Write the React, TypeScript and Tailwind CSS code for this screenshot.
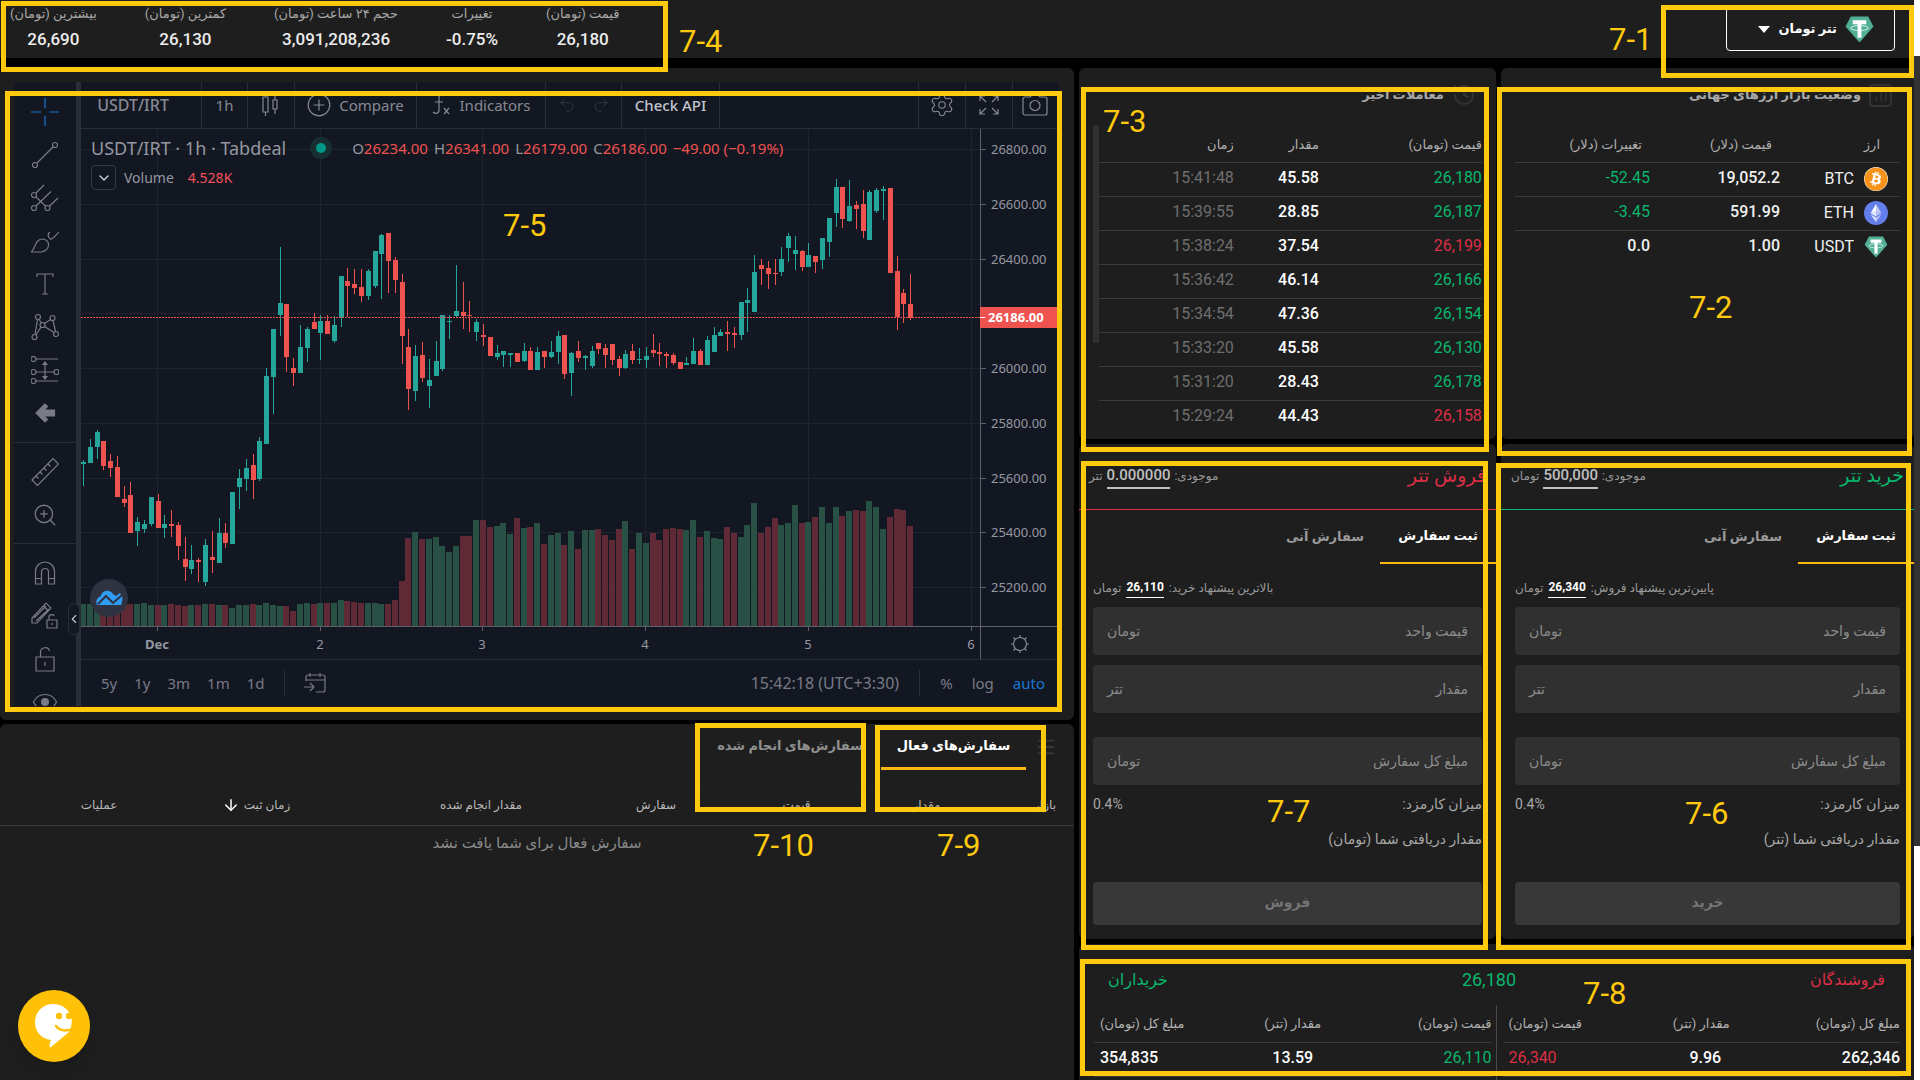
import { useState } from 'react'
import type { ReactNode } from 'react'
import { ArrowDown, ChartNoAxesColumn, ChevronDown, ChevronLeft, History, Menu, Redo2, Settings, Undo2, ZoomIn } from 'lucide-react'
import { FaBitcoin } from 'react-icons/fa'

const STATS = [
  { label: 'قیمت (تومان)', value: '26,180' },
  { label: 'تغییرات', value: '-0.75%' },
  { label: 'حجم ۲۴ ساعت (تومان)', value: '3,091,208,236' },
  { label: 'کمترین (تومان)', value: '26,130' },
  { label: 'بیشترین (تومان)', value: '26,690' },
]

const TRADES = [
  { price: '26,180', amount: '45.58', time: '15:41:48', up: true },
  { price: '26,187', amount: '28.85', time: '15:39:55', up: true },
  { price: '26,199', amount: '37.54', time: '15:38:24', up: false },
  { price: '26,166', amount: '46.14', time: '15:36:42', up: true },
  { price: '26,154', amount: '47.36', time: '15:34:54', up: true },
  { price: '26,130', amount: '45.58', time: '15:33:20', up: true },
  { price: '26,178', amount: '28.43', time: '15:31:20', up: true },
  { price: '26,158', amount: '44.43', time: '15:29:24', up: false },
]

// direction (1 = up), high, body top, body bottom, low, volume bar height
const CANDLES = [
  [1,460,462,464,486,22],[1,439,447,463,463,22],[1,430,432,447,459,22],[0,441,441,466,470,21],[0,454,461,468,477,21],
  [0,456,467,497,497,21],[0,486,499,503,507,21],[0,482,495,533,533,22],[1,517,522,531,546,22],[1,520,524,529,533,23],
  [1,497,497,524,526,21],[0,494,501,528,528,21],[1,515,524,528,538,21],[0,510,524,526,537,22],[0,522,525,546,560,21],
  [0,537,559,567,581,20],[1,545,560,569,574,21],[0,558,560,562,582,21],[1,539,545,582,586,22],[0,531,557,560,573,22],
  [1,518,533,563,563,21],[0,523,533,543,548,21],[1,492,492,544,544,18],[1,469,478,487,509,21],[1,459,468,479,491,21],
  [0,454,465,480,499,22],[1,437,441,479,481,21],[1,368,376,444,444,23],[1,329,329,377,414,21],[1,247,303,315,336,20],
  [0,304,304,357,372,20],[0,358,368,373,386,15],[1,325,347,373,373,22],[1,327,329,348,362,23],[0,313,322,329,329,22],
  [1,315,321,333,360,23],[0,315,321,334,334,23],[1,316,325,341,343,23],[1,276,276,317,327,26],[0,268,281,286,317,25],
  [0,269,284,288,294,24],[0,269,287,296,302,23],[1,269,271,296,300,23],[1,251,251,286,288,23],[1,234,235,254,299,22],
  [0,233,233,261,293,22],[0,257,260,280,293,26],[0,274,282,336,364,45],[0,329,347,389,410,88],[1,345,356,391,401,94],
  [0,342,355,378,382,87],[1,359,380,386,408,87],[1,341,361,376,376,89],[1,315,315,369,371,80],[1,315,321,322,339,74],
  [1,265,311,316,317,80],[0,282,312,316,329,90],[0,301,315,316,332,90],[1,319,322,332,341,106],[0,324,335,337,346,106],
  [0,337,337,356,356,99],[1,345,353,357,360,100],[1,351,351,355,367,103],[1,353,353,355,367,92],[0,353,353,362,362,108],
  [1,343,351,361,362,98],[0,347,351,370,370,99],[1,347,352,370,370,103],[0,351,351,357,368,82],[1,341,352,357,358,91],
  [1,331,336,352,364,93],[0,335,335,374,379,81],[1,352,353,373,396,95],[0,341,351,358,362,77],[1,355,356,358,370,96],
  [1,346,351,366,368,96],[0,343,343,349,354,97],[0,344,348,355,368,91],[0,344,344,360,365,86],[0,356,359,368,376,97],
  [1,350,354,368,369,105],[0,344,351,360,364,77],[1,348,359,360,364,93],[1,347,356,360,368,83],[0,334,350,353,357,93],
  [0,343,352,354,366,86],[0,352,354,356,368,97],[0,353,355,363,365,98],[0,362,362,369,369,97],[1,357,363,365,365,96],
  [1,338,351,364,364,106],[0,349,351,365,365,89],[1,336,340,365,365,95],[1,327,335,352,352,88],[1,329,332,336,336,87],
  [0,321,332,334,351,99],[0,327,333,335,348,93],[1,302,302,335,340,89],[1,288,300,303,332,101],[1,255,272,312,312,123],
  [0,259,265,269,285,93],[0,261,268,274,289,99],[0,259,273,274,285,108],[1,247,259,272,276,101],[1,233,236,248,262,103],
  [1,236,250,254,270,121],[0,250,251,267,271,103],[1,243,255,267,267,104],[0,256,256,262,273,109],[1,238,238,260,269,119],
  [1,218,218,242,257,103],[1,179,187,213,227,119],[0,187,187,219,228,110],[1,180,206,221,222,115],[0,201,205,209,229,116],
  [0,190,204,231,238,115],[1,190,192,240,240,125],[1,188,190,211,213,119],[1,186,189,191,220,97],[0,188,188,273,273,109],
  [0,256,271,317,330,117],[0,289,293,304,323,116],[0,274,304,318,320,100],
]

const PRICES = [26800, 26600, 26400, 26200, 26000, 25800, 25600, 25400, 25200]
const DAYS = ['Dec', '2', '3', '4', '5', '6']

// Guide frames and numbers that lie over the whole screen
const FRAMES = [
  'left-[1661px] top-[5px] w-[253px] h-[73px]',
  'left-[1497px] top-[87px] w-[415px] h-[369px]',
  'left-[1081px] top-[87px] w-[408px] h-[365px]',
  'left-[1px] top-[1px] w-[667px] h-[71px]',
  'left-[5px] top-[91px] w-[1057px] h-[621px]',
  'left-[1496px] top-[463px] w-[415px] h-[487px]',
  'left-[1081px] top-[461px] w-[407px] h-[489px]',
  'left-[1080px] top-[959px] w-[831px] h-[117px]',
  'left-[875px] top-[725px] w-[171px] h-[87px]',
  'left-[695px] top-[723px] w-[171px] h-[89px]',
]

const MARKS = [
  { text: '7-1', place: 'left-[1609px] top-[25px]' },
  { text: '7-2', place: 'left-[1689px] top-[293px]' },
  { text: '7-3', place: 'left-[1103px] top-[107px]' },
  { text: '7-4', place: 'left-[679px] top-[27px]' },
  { text: '7-5', place: 'left-[503px] top-[211px]' },
  { text: '7-6', place: 'left-[1685px] top-[799px]' },
  { text: '7-7', place: 'left-[1267px] top-[797px]' },
  { text: '7-8', place: 'left-[1583px] top-[979px]' },
  { text: '7-9', place: 'left-[937px] top-[831px]' },
  { text: '7-10', place: 'left-[753px] top-[831px]' },
]

/* ── Coin logos ── */
function TetherIcon({ className }: { className: string }) {
  return (
    <svg viewBox="0 0 30 28" className={className}>
      <path d="M6 0.5h18l5.5 10.5L15 27.5 0.5 11z" fill="#50af95" />
      <path d="M8 4.500h14v4h-5v14h-4v-14H8z" fill="#fff" />
      <ellipse cx="15" cy="12.500" rx="9" ry="2.600" fill="none" stroke="#fff" strokeWidth="0.8" />
    </svg>
  )
}

function EthIcon() {
  return (
    <svg viewBox="0 0 24 24" className="size-6">
      <circle cx="12" cy="12" r="12" fill="#627eea" />
      <path d="M12 3v6.700l5.400 2.500z" fill="#fff" fillOpacity="0.6" />
      <path d="M12 3L6.600 12.200 12 9.700z" fill="#fff" />
      <path d="M12 16.600V21l5.400-7.500zM12 15.400l5.400-3.200L12 9.700z" fill="#fff" fillOpacity="0.5" />
      <path d="M12 21v-4.400l-5.400-3.100zM6.600 12.200l5.400 3.200V9.700z" fill="#fff" fillOpacity="0.8" />
    </svg>
  )
}

/* ── Chart tools ── */
function Tool({ name, children, active }: { name: string; children: ReactNode; active?: boolean }) {
  return (
    <button aria-label={name} className={`flex h-[43px] w-full items-center justify-center ${active ? 'text-[#1976d2]' : 'text-[#787b86]'}`}>
      <svg viewBox="0 0 28 28" className="size-7" fill="none" stroke="currentColor" strokeWidth="1.200">
        {children}
      </svg>
    </button>
  )
}

function ToolRail() {
  return (
    <div className="relative w-[67px] shrink-0 border-r-[5px] border-[#2a2e39]">
      {/* last tool is cut off by the frame */}
      <div className="absolute inset-0 overflow-hidden">
        <div className="border-b border-[#2a2e39] py-2">
          <Tool name="Cross" active>
            <path d="M0 14h10M18 14h10M14 0v10M14 18v10" />
          </Tool>
          <Tool name="Trend line">
            <circle cx="4" cy="24" r="2.500" /><circle cx="24" cy="4" r="2.500" />
            <path d="M6 22L22 6" />
          </Tool>
          <Tool name="Pitchfork">
            <circle cx="3" cy="11" r="2.500" /><circle cx="3" cy="24" r="2.500" /><circle cx="16.500" cy="24" r="2.500" />
            <path d="M5 9l8-8M5 13l9.500 9M5 22L20 7.500M18.500 22L27 14" />
          </Tool>
          <Tool name="Brush">
            <path d="M0 25c4-2 4-13 11-13 4 0 7 3 6.500 6.500C17 22 14 25 10 25zM19 5c-3 2-2 6 1 7.500M19.500 12.500c2 0 3-2 9-8" />
          </Tool>
          <Tool name="Text">
            <path d="M6 7V4h16v3M14 4v20M11 24h6" />
          </Tool>
          <Tool name="Pattern">
            <circle cx="7" cy="4" r="2.500" /><circle cx="21.500" cy="5" r="2.500" /><circle cx="11.500" cy="12" r="2.500" />
            <circle cx="3.500" cy="24" r="2.500" /><circle cx="25" cy="21" r="2.500" />
            <path d="M6.500 6.500L4 21.500M8 6.500l2.500 3.500M10 14l-5 8M13.500 10.500l6-4M22 7.500l2.500 11M13.500 13.500l9.500 6" />
          </Tool>
          <Tool name="Projection">
            <circle cx="2.500" cy="3" r="2.500" /><circle cx="2.500" cy="16" r="2.500" /><circle cx="2.500" cy="25" r="2.500" /><circle cx="25.500" cy="16" r="2.500" />
            <path d="M5 3h22M5 16h18M5 25h22M14 8v12" />
            <path d="M14 5l-3 4h6zM14 24l-3-4h6z" fill="currentColor" stroke="none" />
          </Tool>
          <Tool name="Back">
            <path d="M14 5L5 14l9 9 2.500-2.500L13 17h10.500v-6H13l3.500-3.500z" fill="currentColor" />
          </Tool>
        </div>
        <div className="border-b border-[#2a2e39] py-[7px]">
          <Tool name="Measure">
            <path d="M1 22L22 0.500l5.500 5.500L6.500 27.500zM5 18l2.500 2.500M9 14l2.500 2.500M13 10l2.500 2.500M17 6l2.500 2.500" />
          </Tool>
          <button aria-label="Zoom in" className="flex h-[43px] w-full items-center justify-center text-[#787b86]">
            <ZoomIn size={26} strokeWidth={1.2} />
          </button>
        </div>
        <div className="py-[7px]">
          <Tool name="Magnet">
            <path d="M4.500 25V12.500a9.500 9.500 0 0119 0V25h-6V13a3.500 3.500 0 00-7 0v12zM4.500 19.500h6M17.500 19.500h6" />
          </Tool>
          <Tool name="Lock drawing">
            <path d="M1 21v-5L15 1l5 5L6 21zM12.500 4l5 5M3 16l12-12M5 19L18 7M16 18h10v8H16zM18 18v-3c0-3 5-3 5-1M21 21v2" />
          </Tool>
          <Tool name="Lock all">
            <path d="M5 12h18v14H5zM9.500 12V7c0-5 8-6 9-1M14 17v4" />
          </Tool>
          <Tool name="Hide drawings">
            <path d="M2.500 14C7 4 21 4 25.500 14 21 24 7 24 2.500 14z" />
            <circle cx="14" cy="14" r="4" fill="currentColor" stroke="none" />
          </Tool>
        </div>
      </div>
      <button aria-label="Collapse" className="absolute -right-1 top-[521px] flex h-8 w-3 items-center justify-center rounded-md border border-[#2a2e39] bg-[#131722] text-[#c0c3cc]">
        <ChevronLeft size={14} className="shrink-0" />
      </button>
    </div>
  )
}

function ChartToolbar() {
  const cell = 'flex items-center justify-center border-r border-[#2a2e39]'
  return (
    <div className="flex h-[47px] border-b border-[#2a2e39] text-[15px] text-[#868993]">
      <button className={`${cell} w-[121px] pr-4 text-[16px] font-medium`}>USDT/IRT</button>
      <button className={`${cell} w-[46px]`}>1h</button>
      <button aria-label="Candles" className={`${cell} w-[47px]`}>
        <svg viewBox="0 0 20 24" className="h-6 w-5" fill="none" stroke="currentColor" strokeWidth="1.200">
          <path d="M2 4h5v15H2zM4.500 1v3M4.500 19v4M12 7h4v9h-4zM14 3v4M14 16v5" />
        </svg>
      </button>
      <button className={`${cell} w-[122px] gap-2`}>
        <svg viewBox="0 0 24 24" className="size-6 shrink-0" fill="none" stroke="currentColor" strokeWidth="1.200">
          <circle cx="12" cy="12" r="10.800" />
          <path d="M12 6.500v11M6.500 12h11" />
        </svg>
        Compare
      </button>
      <button className={`${cell} w-[129px] gap-[10px]`}>
        <svg viewBox="0 0 18 22" className="h-[22px] w-[18px] shrink-0" fill="none" stroke="currentColor" strokeWidth="1.200">
          <path d="M12 2c-1-2-5-2-5 2v12c0 4-4 4-6 2M3 8h8M12 14l5 6M17 14l-5 6" />
        </svg>
        Indicators
      </button>
      <div className={`${cell} w-[76px] gap-4 text-[#363a45]`}>
        <button aria-label="Undo"><Undo2 size={18} strokeWidth={1.2} /></button>
        <button aria-label="Redo"><Redo2 size={18} strokeWidth={1.2} /></button>
      </div>
      <button className={`${cell} w-[98px] font-medium text-[#c1c4cd]`}>Check API</button>
      <div className="flex-1 border-r border-[#2a2e39]" />
      <button aria-label="Settings" className={`${cell} w-[47px]`}><Settings size={26} strokeWidth={1} /></button>
      <button aria-label="Full screen" className={`${cell} w-[47px]`}>
        <svg viewBox="0 0 20 20" className="size-5" fill="none" stroke="currentColor" strokeWidth="1.200">
          <path d="M1 6V1h5M1 1l6 6M14 1h5v5M19 1l-6 6M1 14v5h5M1 19l6-6M14 19h5v-5M19 19l-6-6" />
        </svg>
      </button>
      <button aria-label="Snapshot" className="flex w-[44px] items-center justify-center">
        <svg viewBox="0 0 26 22" className="h-[22px] w-[26px]" fill="none" stroke="currentColor" strokeWidth="1.200">
          <path d="M3 3h5l2-2h6l2 2h5c1 0 2 1 2 2v14c0 1-1 2-2 2H3c-1 0-2-1-2-2V5c0-1 1-2 2-2z" />
          <circle cx="13" cy="11.500" r="5" />
        </svg>
      </button>
    </div>
  )
}

function PriceChart() {
  return (
    <svg viewBox="81 129 976 530" className="block w-full" fontSize="13" fill="#9598a1">
      {PRICES.map((p, i) => (
        <g key={p}>
          <rect x="81" y={149 + Math.round(i * 54.75)} width="900" height="1" fill="#1f232e" />
          <rect x="981" y={149 + Math.round(i * 54.75)} width="5" height="1" fill="#5d606b" />
          {p !== 26200 && <text x="991" y={154 + Math.round(i * 54.75)}>{p}.00</text>}
        </g>
      ))}
      {DAYS.map((d, i) => {
        const x = Math.round(157 + i * 162.7)
        return (
          <g key={d}>
            <rect x={x} y="129" width="1" height="497" fill="#1f232e" />
            <rect x={x} y="627" width="1" height="4" fill="#5d606b" />
            <text x={x} y="649" textAnchor="middle" fontWeight={i === 0 ? 700 : 400}>{d}</text>
          </g>
        )
      })}

      {CANDLES.map(([up, high, top, bottom, low, vol], i) => {
        const x = Math.round(83 + i * 6.78)
        const color = up ? '#26a69a' : '#ef5350'
        return (
          <g key={i}>
            <rect x={x - 3} y={626 - vol} width="6" height={vol} fill={up ? '#285044' : '#5f2a35'} />
            <rect x={x} y={high} width="1" height={low - high} fill={color} />
            <rect x={x - 2} y={top} width="5" height={Math.max(1, bottom - top)} fill={color} />
          </g>
        )
      })}

      <path d="M81 317.500H981" stroke="#ef5350" strokeDasharray="2 1" />
      <rect x="81" y="626" width="976" height="1" fill="#5d606b" />
      <rect x="980" y="129" width="1" height="530" fill="#5d606b" />
      <rect x="980" y="307" width="77" height="21" fill="#ef5350" />
      <rect x="980" y="317" width="5" height="1" fill="#fff" />
      <text x="988" y="322" fill="#fff" fontWeight="700">26186.00</text>

      <circle cx="109" cy="598" r="19" fill="#2f3241" />
      <path d="M97 605c-2-5 1-8 4-9 1-6 9-7 12-2l3 2 4-3 2 3c1 2 0 7-1 9z" fill="#2f9df4" />
      <path d="M98 604l8-8 7 7 9-8" fill="none" stroke="#2f3241" strokeWidth="2" />
    </svg>
  )
}

function ChartPanel() {
  return (
    <section className="rounded-md bg-[#1e1e1e] py-[14px] pl-[14px] pr-[15px]">
      <div dir="ltr" className="flex overflow-hidden bg-[#131722] pr-[2px] [font-family:'Noto_Sans',sans-serif]">
        <ToolRail />
        <div className="min-w-0 flex-1">
          <ChartToolbar />
          <div className="relative">
            <PriceChart />
            {/* Legend over the plot */}
            <div className="absolute left-[10px] top-[5px] text-[#9598a1]">
              <div className="flex h-7 items-center whitespace-nowrap text-[15px]">
                <span className="text-[18px]">USDT/IRT · 1h · Tabdeal</span>
                <span className="ml-6 mr-5 flex size-[22px] items-center justify-center rounded-full bg-[#17302f]">
                  <span className="size-[10px] rounded-full bg-[#009688]" />
                </span>
                <span className="flex gap-[6px]">
                  <span>O<b className="font-normal text-[#ef5350]">26234.00</b></span>
                  <span>H<b className="font-normal text-[#ef5350]">26341.00</b></span>
                  <span>L<b className="font-normal text-[#ef5350]">26179.00</b></span>
                  <span>C<b className="font-normal text-[#ef5350]">26186.00</b></span>
                  <span className="text-[#ef5350]">−49.00 (−0.19%)</span>
                </span>
              </div>
              <div className="mt-[3px] flex h-[25px] items-center text-[14px]">
                <button aria-label="Hide legend" className="flex size-[25px] items-center justify-center rounded border border-[#363a45] text-[#d1d4dc]">
                  <ChevronDown size={16} />
                </button>
                <span className="ml-2">Volume</span>
                <span className="ml-[14px] text-[#f0505c]">4.528K</span>
              </div>
            </div>
            <button aria-label="Axis settings" className="absolute bottom-[5px] right-[27px] text-[#868993]">
              <svg viewBox="0 0 20 20" className="size-5" fill="none" stroke="currentColor" strokeWidth="1.200">
                <circle cx="10" cy="10" r="6.500" />
                <path d="M10 3.500V1M10 16.500V19M3.500 10H1M16.500 10H19M5.500 5.500L3.500 3.500M14.500 5.500l2-2M5.500 14.500l-2 2M14.500 14.500l2 2" />
              </svg>
            </button>
          </div>
          <div className="flex h-[47px] items-center border-t border-[#2a2e39] text-[15px] text-[#787b86]">
            <div className="flex gap-[17px] pl-5">
              {['5y', '1y', '3m', '1m', '1d'].map(r => <button key={r}>{r}</button>)}
            </div>
            <span className="mx-[19px] h-[26px] w-px bg-[#2a2e39]" />
            <button aria-label="Go to date">
              <svg viewBox="0 0 22 20" className="h-5 w-[22px]" fill="none" stroke="currentColor" strokeWidth="1.200">
                <path d="M2 8V4c0-1 1-2 2-2h15c1 0 2 1 2 2v13c0 1-1 2-2 2h-7M2 7h19M6 0v4M16 0v4M0 14h9M6 10l4 4-4 4" />
              </svg>
            </button>
            <div className="flex-1" />
            <span className="text-[16px]">15:42:18 (UTC+3:30)</span>
            <span className="mx-5 h-[26px] w-px bg-[#2a2e39]" />
            <div className="flex gap-[19px] pr-3">
              <button>%</button>
              <button>log</button>
              <button className="text-[#1976d2]">auto</button>
            </div>
          </div>
        </div>
      </div>
    </section>
  )
}

/* ── Orders ── */
function OrdersPanel() {
  const [tab, setTab] = useState<'active' | 'done'>('active')
  const tabClass = (on: boolean) => `h-[46px] border-b-[3px] text-[13px] font-bold ${on ? 'border-[#fbb80f] text-white' : 'border-transparent text-[#8f8f8f]'}`

  return (
    <section className="flex-1 rounded-t-md bg-[#1e1e1e]">
      <div className="flex h-[62px] items-start border-b border-[#222] pr-[17px]">
        <Menu size={22} className="mt-3 text-[#383838]" />
        <button onClick={() => setTab('active')} className={`mr-[9px] w-[145px] ${tabClass(tab === 'active')}`}>سفارش‌های فعال</button>
        <button onClick={() => setTab('done')} className={`mr-[18px] w-[145px] whitespace-nowrap ${tabClass(tab === 'done')}`}>سفارش‌های انجام شده</button>
      </div>
      <table className="w-full table-fixed text-[12px]">
        <thead>
          <tr className="h-[39px] border-b border-[#3a3a3a] text-[#b8b8b8]">
            <th className="w-[90px] pr-[18px] text-right font-normal">بازار</th>
            <th className="w-[115px] font-normal">مقدار</th>
            <th className="w-[145px] font-normal">قیمت</th>
            <th className="w-[136px] font-normal">سفارش</th>
            <th className="w-[214px] font-normal">مقدار انجام شده</th>
            <th className="pr-[60px] font-normal">
              <span className="flex items-center justify-center gap-1">زمان ثبت <ArrowDown size={18} className="text-white" /></span>
            </th>
            <th className="w-[198px] font-normal">عملیات</th>
          </tr>
        </thead>
        <tbody>
          <tr className="h-9">
            <td colSpan={7} className="text-center text-[15px] text-[#8a8a8a]">سفارش فعال برای شما یافت نشد</td>
          </tr>
        </tbody>
      </table>
    </section>
  )
}

/* ── Market lists ── */
function WorldMarket() {
  const rows = [
    { icon: <FaBitcoin size={24} className="rounded-full bg-white text-[#f7931a]" />, coin: 'BTC', price: '19,052.2', change: '-52.45' },
    { icon: <EthIcon />, coin: 'ETH', price: '591.99', change: '-3.45' },
    { icon: <TetherIcon className="h-[22px] w-6" />, coin: 'USDT', price: '1.00', change: '0.0' },
  ]
  return (
    <section className="h-[371px] min-w-0 flex-[413] rounded-md bg-[#1e1e1e] px-[14px] pt-[15px]">
      <h2 className="flex h-6 items-center gap-2 pr-2 text-[13px] font-semibold text-[#a8a8a8]">
        <span className="flex size-[23px] items-center justify-center rounded-sm border-2 border-[#333] text-[#333]"><ChartNoAxesColumn size={16} /></span>
        وضعیت بازار ارزهای جهانی
      </h2>
      <table className="mt-5 w-full table-fixed text-[16px] text-[#f0f0f0]">
        <thead>
          <tr className="h-[35px] text-[13px] text-[#b0b0b0]">
            <th className="w-[120px] pr-5 text-right font-normal">ارز</th>
            <th className="w-[130px] pr-2 text-right font-normal">قیمت (دلار)</th>
            <th className="pr-2 text-right font-normal">تغییرات (دلار)</th>
          </tr>
        </thead>
        <tbody>
          {rows.map(row => (
            <tr key={row.coin} className="h-[34px] border-t border-[#3a3a3a]">
              <td className="pr-3"><span className="flex items-center gap-[10px]">{row.icon}{row.coin}</span></td>
              <td className="pb-[2px] text-right font-medium"><bdi>{row.price}</bdi></td>
              <td className={`pb-[2px] text-right ${row.change.startsWith('-') ? 'text-[#09b66d]' : 'font-medium'}`}><bdi dir="ltr">{row.change}</bdi></td>
            </tr>
          ))}
        </tbody>
      </table>
    </section>
  )
}

function RecentTrades() {
  return (
    <section className="flex h-[371px] min-w-0 flex-[417] rounded-md bg-[#1e1e1e] pl-[14px] pr-[14px] pt-[15px]">
      <div className="flex-1">
        <h2 className="flex h-6 items-center gap-2 pr-[6px] text-[13px] font-semibold text-[#a8a8a8]">
          <History size={24} className="text-[#333]" />
          معاملات اخیر
        </h2>
        <table className="mt-5 w-full table-fixed text-[16px]">
          <thead>
            <tr className="h-[35px] text-[13px] text-[#b0b0b0]">
              <th className="w-[163px] text-right font-normal">قیمت (تومان)</th>
              <th className="w-[85px] text-right font-normal">مقدار</th>
              <th className="text-right font-normal">زمان</th>
            </tr>
          </thead>
          <tbody>
            {TRADES.map(t => (
              <tr key={t.time} className="h-[34px] border-t border-[#3a3a3a]">
                <td className={`pb-[2px] ${t.up ? 'text-[#09b66d]' : 'text-[#dc2f45]'}`}>{t.price}</td>
                <td className="pb-[2px] font-medium text-white">{t.amount}</td>
                <td className="pb-[2px] text-[#6e6e6e]">{t.time}</td>
              </tr>
            ))}
          </tbody>
        </table>
      </div>
      <div className="mt-[42px] h-[218px] w-[6px] bg-[#303030]" />
    </section>
  )
}

/* ── Buy / sell form ── */
type OrderFormProps = {
  title: string
  balance: string
  balanceUnit: string
  hint: string
  hintPrice: string
  receive: string
  action: string
  buy?: boolean
}

function OrderForm({ title, balance, balanceUnit, hint, hintPrice, receive, action, buy }: OrderFormProps) {
  const fields = [
    { name: 'قیمت واحد', unit: 'تومان', gap: '' },
    { name: 'مقدار', unit: 'تتر', gap: 'mt-[10px]' },
    { name: 'مبلغ کل سفارش', unit: 'تومان', gap: 'mt-6' },
  ]
  return (
    <section className={`h-[495px] min-w-0 rounded-md bg-[#1e1e1e] ${buy ? 'flex-[413]' : 'flex-[417]'}`}>
      <div className={`flex h-[66px] items-center justify-between border-b px-[10px] ${buy ? 'border-[#09b66d]' : 'border-[#dc2f45]'}`}>
        <h2 className={`text-[19px] ${buy ? 'text-[#09b66d]' : 'text-[#dc2f45]'}`}>{title}</h2>
        <p className="flex items-baseline gap-1 text-[12px] text-[#9a9a9a]">
          موجودی: <b className="border-b-2 border-[#c0c0c0] pb-[2px] text-[15px] font-medium leading-[20px] text-[#c0c0c0]">{balance}</b> {balanceUnit}
        </p>
      </div>
      <div className="flex h-[54px] text-[13px] font-bold">
        <button className="w-[116px] border-b-2 border-[#fbb80f] text-white">ثبت سفارش</button>
        <button className="w-[110px] text-[#9a9a9a]">سفارش آنی</button>
      </div>
      <div className="px-[14px]">
        <p className="flex h-[43px] items-center justify-end gap-[5px] pt-1 text-[12px] text-[#9a9a9a]">
          {hint} <b className="border-b border-white text-[12px] leading-[20px] text-white">{hintPrice}</b> تومان
        </p>
        {fields.map(f => (
          <div key={f.name} className={`flex h-12 items-center justify-between rounded bg-[#303030] px-[14px] text-[14px] text-[#8c8c8c] ${f.gap}`}>
            <input aria-label={f.name} placeholder={f.name} className="min-w-0 flex-1 bg-transparent outline-none placeholder:text-[#8c8c8c]" />
            <span>{f.unit}</span>
          </div>
        ))}
        <div className="flex h-[38px] items-center justify-between text-[14px] text-[#a8a8a8]">
          <span>میزان کارمزد:</span>
          <bdi dir="ltr">0.4%</bdi>
        </div>
        <p className="flex h-8 items-center text-[14px] text-[#a8a8a8]">{receive}</p>
        <button className="mt-[27px] h-[43px] w-full rounded bg-[#383838] pb-[2px] text-[14px] font-bold text-[#757575]">{action}</button>
      </div>
    </section>
  )
}

/* ── Order book ── */
function OrderBook() {
  return (
    <section className="flex-1 rounded-t-md bg-[#1e1e1e]">
      <div className="flex h-[61px] items-center justify-between px-[29px] pt-[10px] text-[16px]">
        <h2 className="text-[#dc2f45]">فروشندگان</h2>
        <span className="text-[18px] text-[#09b66d]">26,180</span>
        <h2 className="text-[#09b66d]">خریداران</h2>
      </div>
      <div className="flex h-[75px]">
        <div className="flex-1 border-l border-[#4a4a4a] pl-[6px] pr-[14px]">
          <table className="w-full table-fixed text-[16px]">
            <thead>
              <tr className="h-[37px] border-b border-[#3a3a3a] text-[13px] text-[#b0b0b0]">
                <th className="text-right font-normal">مبلغ کل (تومان)</th>
                <th className="font-normal">مقدار (تتر)</th>
                <th className="pl-[6px] text-left font-normal">قیمت (تومان)</th>
              </tr>
            </thead>
            <tbody>
              <tr className="h-[34px] border-b border-[#3a3a3a] font-medium text-white">
                <td className="pb-[2px]">262,346</td>
                <td className="pb-[2px] pl-2 text-center">9.96</td>
                <td className="pb-[2px] pl-[6px] text-left font-normal text-[#dc2f45]">26,340</td>
              </tr>
            </tbody>
          </table>
        </div>
        <div className="flex-1 pl-[15px] pr-1">
          <table className="w-full table-fixed text-[16px]">
            <thead>
              <tr className="h-[37px] border-b border-[#3a3a3a] text-[13px] text-[#b0b0b0]">
                <th className="text-right font-normal">قیمت (تومان)</th>
                <th className="font-normal">مقدار (تتر)</th>
                <th className="pl-[6px] text-left font-normal">مبلغ کل (تومان)</th>
              </tr>
            </thead>
            <tbody>
              <tr className="h-[34px] border-b border-[#3a3a3a] font-medium text-white">
                <td className="pb-[2px] font-normal text-[#09b66d]">26,110</td>
                <td className="pb-[2px] text-center">13.59</td>
                <td className="pb-[2px] pl-[6px] text-left">354,835</td>
              </tr>
            </tbody>
          </table>
        </div>
      </div>
    </section>
  )
}

export default function App() {
  return (
    <div dir="rtl" className="relative flex min-h-screen overflow-hidden bg-black [font-family:Roboto,'DejaVu_Sans',sans-serif]">
      {/* Page scroll track */}
      <div className="flex w-[6px] shrink-0 flex-col bg-white pt-14">
        <div className="h-[790px] bg-[#333]" />
      </div>

      <div className="flex min-w-0 flex-1 flex-col">
        <header className="flex h-[58px] items-start justify-between bg-[#1e1e1e] pl-[10px] pr-[19px]">
          <button className="mt-[7px] flex h-11 w-[169px] items-center gap-2 rounded border border-white pr-5 text-[13px] font-bold text-white">
            <TetherIcon className="h-[27px] w-[29px]" />
            تتر تومان
            <svg viewBox="0 0 12 7" className="h-[7px] w-3"><path d="M0 0h12L6 7z" fill="#fff" /></svg>
          </button>
          <dl className="flex gap-12 pt-1 text-center">
            {STATS.map(s => (
              <div key={s.label}>
                <dt className="h-5 whitespace-nowrap text-[13px] leading-[20px] text-[#a8a8a8]">{s.label}</dt>
                <dd className="mt-[3px] text-[17px] font-medium leading-[24px] text-[#ececec]"><bdi dir="ltr">{s.value}</bdi></dd>
              </div>
            ))}
          </dl>
        </header>

        <main className="mt-[10px] flex flex-1 gap-[5px]">
          <div className="flex min-w-0 flex-[835] flex-col gap-[5px]">
            <div className="flex gap-[5px]">
              <WorldMarket />
              <RecentTrades />
            </div>
            <div className="flex gap-[5px]">
              <OrderForm
                buy
                title="خرید تتر"
                balance="500,000"
                balanceUnit="تومان"
                hint="پایین‌ترین پیشنهاد فروش:"
                hintPrice="26,340"
                receive="مقدار دریافتی شما (تتر)"
                action="خرید"
              />
              <OrderForm
                title="فروش تتر"
                balance="0.000000"
                balanceUnit="تتر"
                hint="بالاترین پیشنهاد خرید:"
                hintPrice="26,110"
                receive="مقدار دریافتی شما (تومان)"
                action="فروش"
              />
            </div>
            <OrderBook />
          </div>
          <div className="flex min-w-0 flex-[1074] flex-col gap-1">
            <ChartPanel />
            <OrdersPanel />
          </div>
        </main>
      </div>

      {/* Support chat */}
      <button aria-label="پشتیبانی" className="absolute bottom-[18px] left-[18px] size-[72px] rounded-full bg-[#ffc107] shadow-lg">
        <svg viewBox="0 0 72 72" className="size-[72px]">
          <path d="M33 50C23 49 17 41 17 32c0-10 8-18 18-18 8 0 14 4 17 10 3 6 2 12-1 18L33 57c-2 1-2-2 0-7z" fill="#fff" />
          <circle cx="41" cy="26" r="3.200" fill="#ffc107" />
          <circle cx="51" cy="26" r="3.200" fill="#ffc107" />
          <path d="M38 36c3 4 8 5 13 4" fill="none" stroke="#ffc107" strokeWidth="2.500" strokeLinecap="round" />
        </svg>
      </button>

      {FRAMES.map(place => (
        <div key={place} className={`pointer-events-none absolute border-[5px] border-[#ffc90e] ${place}`} />
      ))}
      {MARKS.map(m => (
        <span key={m.text} dir="ltr" className={`pointer-events-none absolute text-[31px] leading-[30px] text-[#ffc90e] ${m.place}`}>{m.text}</span>
      ))}
    </div>
  )
}
